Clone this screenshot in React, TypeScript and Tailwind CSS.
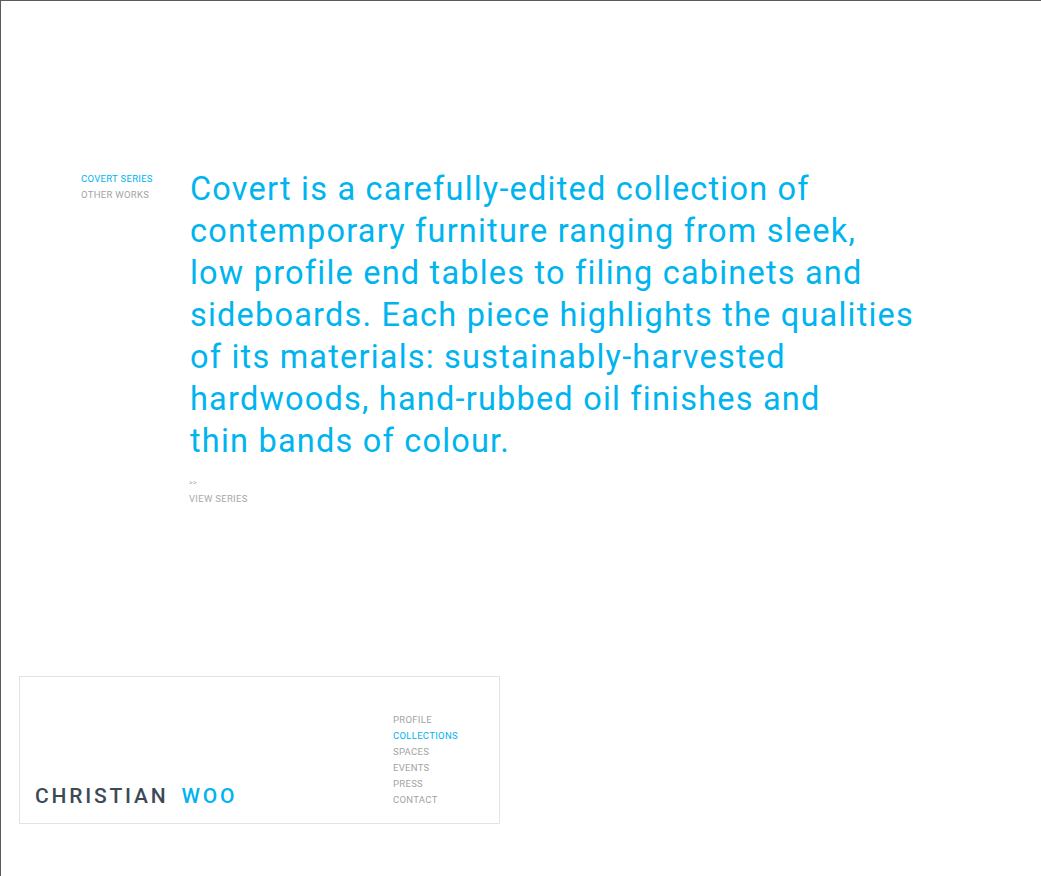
export default function App() {
  const blue = "text-[#00b4ef]";
  return (
    <div className="h-[876px] w-[1041px] border-t border-l border-[#5b5b5b] bg-white flex flex-col font-['Roboto',sans-serif] overflow-hidden">
      <div className="flex pt-[167px]">
        <div className="w-[189px] shrink-0 pl-[80px] pt-[3px] text-[9.5px] leading-[16px] tracking-[0.3px] uppercase">
          <div className={blue}>Covert Series</div>
          <div className="text-[#a3a3a3]">Other Works</div>
        </div>
        <div>
          <p className={`${blue} text-[32.5px] leading-[42px] tracking-[1.2px] whitespace-nowrap`}>
            Covert is a carefully-edited collection of
            <br />
            contemporary furniture ranging from sleek,
            <br />
            low profile end tables to filing cabinets and
            <br />
            sideboards. Each piece highlights the qualities
            <br />
            of its materials: sustainably-harvested
            <br />
            hardwoods, hand-rubbed oil finishes and
            <br />
            thin bands of colour.
          </p>
          <div className="mt-[14px] -ml-px text-[9.5px] leading-[15px] tracking-[0.3px] text-[#a8a8a8] uppercase">
            <div className="text-[7px]">&gt;&gt;</div>
            <div>View Series</div>
          </div>
        </div>
      </div>
      <div className="mt-auto mb-[52px] ml-[18px] w-[481px] h-[148px] border border-[#e3e3e3] flex items-end justify-between pb-[15px]">
        <div className="pl-[15px] text-[21px] leading-[24px] tracking-[2.8px] font-medium text-[#3c4a56] whitespace-nowrap">
          CHRISTIAN <span className={`${blue} ml-[5px]`}>WOO</span>
        </div>
        <ul className="w-[106px] text-[9.5px] leading-[16px] tracking-[0.3px] text-[#a3a3a3] uppercase">
          <li>Profile</li>
          <li className={blue}>Collections</li>
          <li>Spaces</li>
          <li>Events</li>
          <li>Press</li>
          <li>Contact</li>
        </ul>
      </div>
    </div>
  );
}
